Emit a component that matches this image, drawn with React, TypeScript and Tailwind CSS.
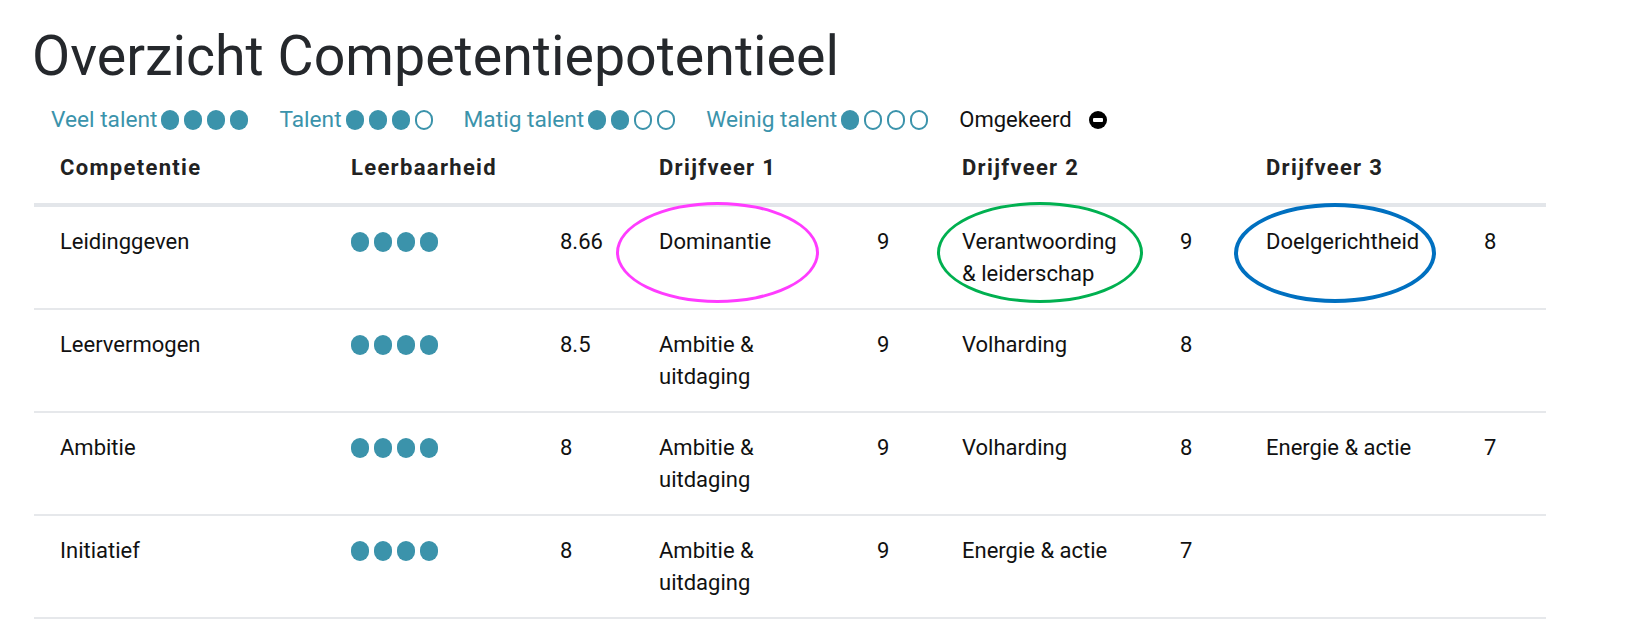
import React from "react";

const rows = [
  {
    name: "Leidinggeven",
    score: "8.66",
    drivers: [
      ["Dominantie", "9"],
      ["Verantwoording & leiderschap", "9"],
      ["Doelgerichtheid", "8"],
    ],
  },
  {
    name: "Leervermogen",
    score: "8.5",
    drivers: [
      ["Ambitie & uitdaging", "9"],
      ["Volharding", "8"],
    ],
  },
  {
    name: "Ambitie",
    score: "8",
    drivers: [
      ["Ambitie & uitdaging", "9"],
      ["Volharding", "8"],
      ["Energie & actie", "7"],
    ],
  },
  {
    name: "Initiatief",
    score: "8",
    drivers: [
      ["Ambitie & uitdaging", "9"],
      ["Energie & actie", "7"],
    ],
  },
];

const legend = [
  { label: "Veel talent", filled: 4 },
  { label: "Talent", filled: 3 },
  { label: "Matig talent", filled: 2 },
  { label: "Weinig talent", filled: 1 },
];

const cols =
  "grid grid-cols-[291px_209px_99px_218px_85px_218px_86px_218px_88px]";

const Dots = ({ filled }: { filled: number }) => (
  <span className="flex items-center gap-[5px]">
    {[0, 1, 2, 3].map((i) => (
      <span
        key={i}
        className={
          i < filled
            ? "w-[18px] h-[20px] rounded-full bg-[#3b93ab]"
            : "w-[18px] h-[20px] rounded-full border-2 border-[#3b93ab]"
        }
      />
    ))}
  </span>
);

export default function App() {
  return (
    <div className="relative w-[1640px] h-[623px] bg-white font-[Roboto,'Liberation_Sans',sans-serif] overflow-hidden">
      <h1 className="pt-[25px] pl-[32px] text-[55.5px] leading-[64px] font-normal text-[#25282c]">
        Overzicht Competentiepotentieel
      </h1>

      {/* legenda */}
      <div className="mt-[15px] pl-[51px] flex items-center gap-[31px] text-[22px] leading-[32px]">
        {legend.map((l) => (
          <div key={l.label} className="flex items-center gap-[4px] text-[#3b93ab]">
            <span className="text-[22.7px]">{l.label}</span>
            <Dots filled={l.filled} />
          </div>
        ))}
        <div className="flex items-center gap-[17px] text-[#111]">
          <span>Omgekeerd</span>
          <span className="w-[18px] h-[18px] rounded-full bg-black flex items-center justify-center">
            <span className="w-[10px] h-[4px] bg-white rounded-[1px]" />
          </span>
        </div>
      </div>

      <div className="ml-[34px] w-[1512px] text-[22px] leading-[32px]">
        <div
          className={`${cols} pt-[16px] pb-[19px] border-b-4 border-[#e3e6ea] font-bold tracking-[0.06em] text-[#222]`}
        >
          <div className="pl-[26px]">Competentie</div>
          <div className="pl-[26px] col-span-2">Leerbaarheid</div>
          <div className="pl-[26px] col-span-2">Drijfveer 1</div>
          <div className="pl-[26px] col-span-2">Drijfveer 2</div>
          <div className="pl-[26px] col-span-2">Drijfveer 3</div>
        </div>

        {rows.map((r) => (
          <div
            key={r.name}
            className={`${cols} pt-[19px] pb-[18px] border-b-2 border-[#e6e8eb] text-[#111]`}
          >
            <div className="pl-[26px]">{r.name}</div>
            <div className="pl-[26px] h-[32px] flex items-center">
              <Dots filled={4} />
            </div>
            <div className="pl-[26px]">{r.score}</div>
            {[0, 1, 2].map((i) => (
              <React.Fragment key={i}>
                <div className="pl-[26px] pr-[26px] min-h-[64px]">
                  {r.drivers[i]?.[0]}
                </div>
                <div className="pl-[26px]">{r.drivers[i]?.[1]}</div>
              </React.Fragment>
            ))}
          </div>
        ))}
      </div>

      {/* annotaties */}
      <div className="absolute left-[616px] top-[202px] w-[203px] h-[101px] rounded-[50%] border-[3px] border-[#ff3cff]" />
      <div className="absolute left-[937px] top-[202px] w-[206px] h-[101px] rounded-[50%] border-[3px] border-[#00b050]" />
      <div className="absolute left-[1234px] top-[203px] w-[202px] h-[100px] rounded-[50%] border-[4px] border-[#0070c0]" />
    </div>
  );
}
